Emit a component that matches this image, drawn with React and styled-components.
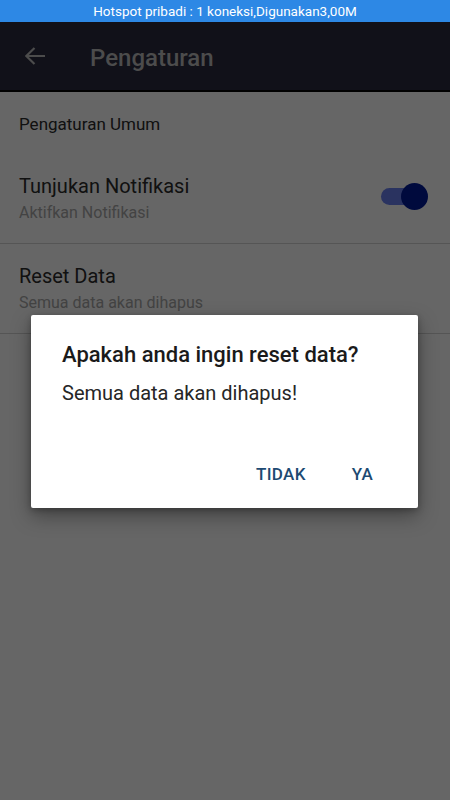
import styled, { createGlobalStyle } from 'styled-components'

const GlobalStyle = createGlobalStyle`
  html, body {
    margin: 0;
    padding: 0;
    background: #ffffff;
  }
  body {
    font-family: Roboto, "Noto Sans", "Liberation Sans", sans-serif;
  }
  * { box-sizing: border-box; }
`

const Phone = styled.div`
  width: 450px;
  height: 800px;
  display: flex;
  flex-direction: column;
  overflow: hidden;
  background: #ffffff;
`

const StatusBar = styled.div`
  height: 22px;
  background: #2d88e5;
  color: #ffffff;
  font-size: 13.5px;
  display: flex;
  align-items: center;
  justify-content: center;
  flex-shrink: 0;
`

const Screen = styled.div`
  position: relative;
  flex: 1;
  display: flex;
  flex-direction: column;
`

const Toolbar = styled.div`
  height: 70px;
  background: #2b2b3f;
  border-bottom: 2px solid #000000;
  display: flex;
  align-items: center;
  padding-left: 25px;
  gap: 45px;
`

const BackIcon = styled.svg`
  width: 20px;
  height: 18px;
  display: block;
`

const Title = styled.div`
  color: #bdbdbd;
  font-size: 24px;
  font-weight: 500;
  margin-top: 3px;
`

const SectionHeader = styled.div`
  padding: 22px 19px 20px;
  font-size: 17px;
  line-height: 20px;
  color: #2b2b2b;
`

const Row = styled.div`
  display: flex;
  align-items: center;
  padding: 20px 19px;
  border-bottom: 1px solid #d4d4d4;
`

const RowText = styled.div`
  flex: 1;
  display: flex;
  flex-direction: column;
  gap: 5px;
`

const RowTitle = styled.div`
  font-size: 20px;
  line-height: 24px;
  color: #2b2b2b;
`

const RowSub = styled.div`
  font-size: 16px;
  line-height: 20px;
  color: #a8a8a8;
`

const Switch = styled.div`
  position: relative;
  width: 47px;
  height: 27px;
  margin-right: 3px;
  margin-top: -4px;
`

const Track = styled.div`
  position: absolute;
  left: 0;
  top: 5px;
  width: 36px;
  height: 17px;
  border-radius: 9px;
  background: #6a80f0;
`

const Thumb = styled.div`
  position: absolute;
  right: 0;
  top: 0;
  width: 27px;
  height: 27px;
  border-radius: 50%;
  background: #001999;
`

const Overlay = styled.div`
  position: absolute;
  inset: 0;
  background: rgba(0, 0, 0, 0.6);
  display: flex;
  align-items: center;
  justify-content: flex-start;
  padding-left: 31px;
`

const Dialog = styled.div`
  width: 387px;
  background: #ffffff;
  border-radius: 2px;
  box-shadow: 0 8px 20px rgba(0, 0, 0, 0.35), 0 2px 6px rgba(0, 0, 0, 0.25);
  padding-top: 27px;
  padding-bottom: 10px;
`

const DialogTitle = styled.div`
  padding: 0 31px;
  font-size: 22px;
  line-height: 26px;
  font-weight: 500;
  color: #1a1a1a;
`

const DialogBody = styled.div`
  padding: 0 31px;
  margin-top: 13px;
  font-size: 20px;
  line-height: 24px;
  color: #262626;
`

const ButtonRow = styled.div`
  display: flex;
  justify-content: flex-end;
  gap: 18px;
  padding-right: 31px;
  margin-top: 45px;
`

const Button = styled.div`
  height: 48px;
  padding: 0 14px;
  display: flex;
  align-items: center;
  font-size: 17px;
  font-weight: 500;
  color: #1d4a72;
  letter-spacing: 0.3px;
`

const App = () => {
  return (
    <>
      <GlobalStyle />
      <Phone>
        <StatusBar>Hotspot pribadi : 1 koneksi,Digunakan3,00M</StatusBar>
        <Screen>
          <Toolbar>
            <BackIcon viewBox="0 0 20 18">
              <path d="M1 9H20M9.5 1L1.3 9L9.5 17" fill="none" stroke="#bdbdbd" strokeWidth="2.2" />
            </BackIcon>
            <Title>Pengaturan</Title>
          </Toolbar>
          <SectionHeader>Pengaturan Umum</SectionHeader>
          <Row>
            <RowText>
              <RowTitle>Tunjukan Notifikasi</RowTitle>
              <RowSub>Aktifkan Notifikasi</RowSub>
            </RowText>
            <Switch>
              <Track />
              <Thumb />
            </Switch>
          </Row>
          <Row>
            <RowText>
              <RowTitle>Reset Data</RowTitle>
              <RowSub>Semua data akan dihapus</RowSub>
            </RowText>
          </Row>
          <Overlay>
            <Dialog>
              <DialogTitle>Apakah anda ingin reset data?</DialogTitle>
              <DialogBody>Semua data akan dihapus!</DialogBody>
              <ButtonRow>
                <Button>TIDAK</Button>
                <Button>YA</Button>
              </ButtonRow>
            </Dialog>
          </Overlay>
        </Screen>
      </Phone>
    </>
  )
}

export default App
